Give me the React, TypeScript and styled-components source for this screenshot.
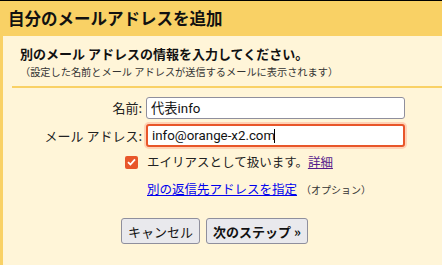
import styled, { createGlobalStyle } from "styled-components";

const yellow = "#f9d165";
const cream = "#fff5d8";
const font = `"Noto Sans CJK JP", "Noto Sans", sans-serif`;
const inputFont = `Roboto, "Noto Sans CJK JP", sans-serif`;

const GlobalStyle = createGlobalStyle`
  html, body {
    margin: 0;
    padding: 0;
    background: ${cream};
    font-family: ${font};
    color: #222;
  }
`;

const Page = styled.div`
  width: 442px;
  height: 265px;
  border-top: 1px solid #000;
  box-sizing: border-box;
  display: flex;
  flex-direction: column;
  overflow: hidden;
`;

const Header = styled.div`
  height: 35px;
  flex: none;
  background: ${yellow};
  display: flex;
  align-items: center;
  padding-left: 8px;
`;

const Title = styled.h1`
  margin: 0;
  font-size: 16.5px;
  font-weight: 700;
  color: #111;
  line-height: 1;
`;

const Panel = styled.div`
  flex: 1;
  border-left: 3px solid ${yellow};
  background: ${cream};
  display: flex;
  flex-direction: column;
`;

const Intro = styled.div`
  margin-left: 9px;
  padding: 9px 0 7px 8px;
  border-bottom: 2px solid ${yellow};
`;

const Heading = styled.p`
  margin: 0;
  font-size: 13px;
  font-weight: 700;
  line-height: 18px;
  color: #111;
`;

const Note = styled.p`
  margin: 2px 0 0;
  font-size: 10.2px;
  line-height: 14px;
  color: #333;
`;

const Form = styled.div`
  display: grid;
  grid-template-columns: 139px 259px;
  column-gap: 4px;
  row-gap: 3px;
  align-items: center;
  margin-top: 7px;
`;

const Label = styled.label`
  justify-self: end;
  font-size: 13px;
  color: #222;
`;

const Field = styled.div`
  position: relative;
  height: 25px;
  display: flex;
  align-items: center;
`;

const Input = styled.input<{ $focused?: boolean }>`
  box-sizing: border-box;
  width: 100%;
  height: ${(p) => (p.$focused ? "23px" : "22px")};
  margin: 0;
  padding: 0 4px;
  font-family: ${inputFont};
  font-size: 13.3px;
  color: #111;
  background: #fff;
  border: ${(p) => (p.$focused ? "2px solid #e8562a" : "1px solid #8f8f9d")};
  border-radius: 3px;
  box-shadow: ${(p) => (p.$focused ? "0 0 0 2px #ffd3b6" : "none")};
  outline: none;
`;

const Caret = styled.span`
  position: absolute;
  left: 128px;
  top: 6px;
  width: 1px;
  height: 14px;
  background: #000;
`;

const Box = styled.span`
  justify-self: end;
  margin-right: 4px;
  width: 13px;
  height: 13px;
  border-radius: 2px;
  background: #e8562a;
  display: flex;
  align-items: center;
  justify-content: center;
`;

const CheckText = styled.span`
  font-size: 12.5px;
  padding-left: 1px;
  line-height: 22px;
  color: #222;
`;

const Visited = styled.a`
  color: #551a8b;
  text-decoration: underline;
`;

const LinkLine = styled.div`
  grid-column: 2;
  padding-left: 1px;
  line-height: 22px;
`;

const BlueLink = styled.a`
  color: #0000ee;
  font-size: 12.5px;
  text-decoration: underline;
`;

const Small = styled.span`
  font-size: 10px;
  color: #333;
  margin-left: 4px;
`;

const Buttons = styled.div`
  display: flex;
  gap: 6px;
  margin: 17px 0 0 118px;
`;

const Button = styled.button<{ $primary?: boolean }>`
  height: 26px;
  padding: 0 6px;
  font-family: ${font};
  font-size: 13px;
  font-weight: ${(p) => (p.$primary ? 700 : 400)};
  color: #111;
  background: #e9e9ed;
  border: 1px solid #8f8f9d;
  border-radius: 3px;
`;

export default function App() {
  return (
    <>
      <GlobalStyle />
      <Page>
        <Header>
          <Title>自分のメールアドレスを追加</Title>
        </Header>
        <Panel>
          <Intro>
            <Heading>別のメール アドレスの情報を入力してください。</Heading>
            <Note>（設定した名前とメール アドレスが送信するメールに表示されます）</Note>
          </Intro>
          <Form>
            <Label>名前:</Label>
            <Field>
              <Input defaultValue="代表info" />
            </Field>
            <Label>メール アドレス:</Label>
            <Field>
              <Input $focused defaultValue="info@orange-x2.com" />
              <Caret />
            </Field>
            <Box>
              <svg width="9" height="8" viewBox="0 0 9 8">
                <path d="M1 4.2 L3.4 6.5 L8 1.3" fill="none" stroke="#fff" strokeWidth="1.8" />
              </svg>
            </Box>
            <CheckText>
              エイリアスとして扱います。<Visited href="#">詳細</Visited>
            </CheckText>
            <LinkLine>
              <BlueLink href="#">別の返信先アドレスを指定</BlueLink>
              <Small>（オプション）</Small>
            </LinkLine>
          </Form>
          <Buttons>
            <Button>キャンセル</Button>
            <Button $primary>次のステップ »</Button>
          </Buttons>
        </Panel>
      </Page>
    </>
  );
}
